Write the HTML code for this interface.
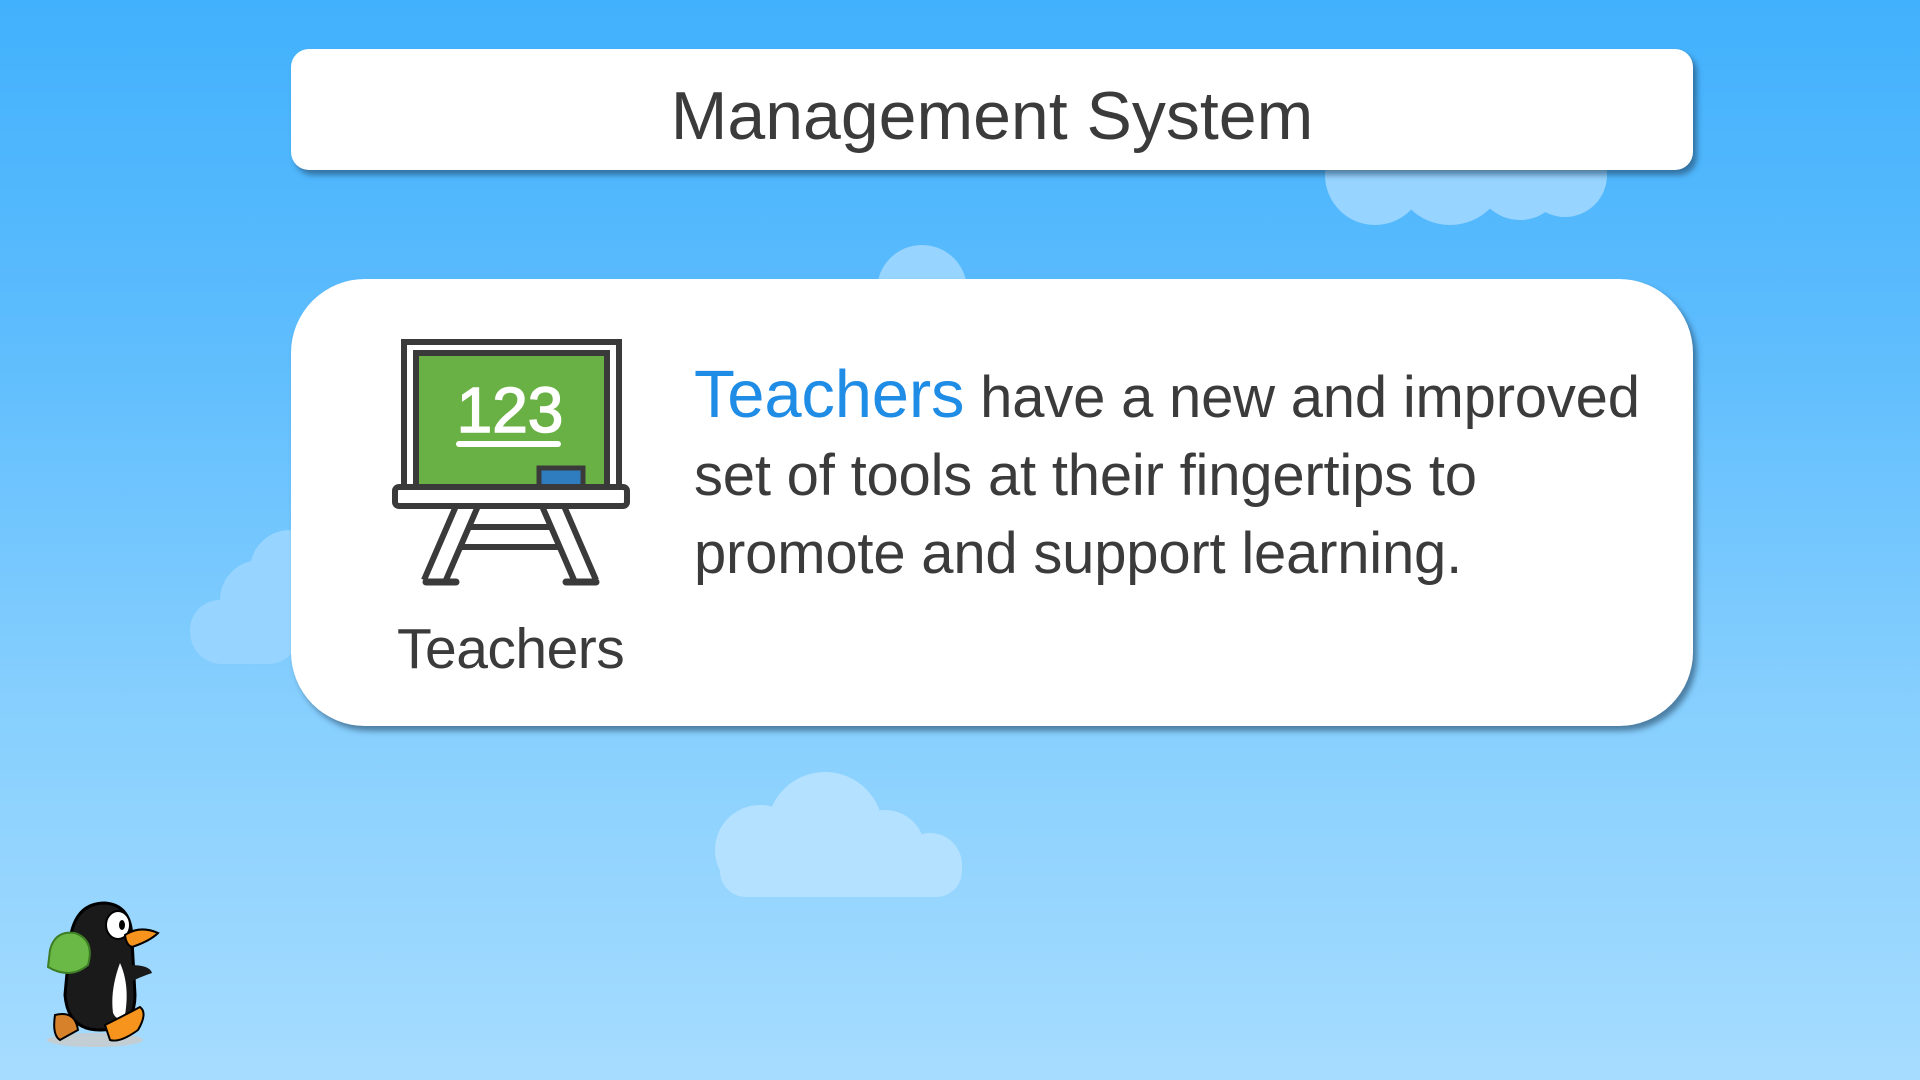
<!DOCTYPE html>
<html><head><meta charset="utf-8"><style>
html,body{margin:0;padding:0}
body{width:1920px;height:1080px;overflow:hidden;position:relative;background:linear-gradient(#42b1fd 0%,#5cbcfd 30%,#86cffe 65%,#a6dcff 100%);font-family:"Liberation Sans",sans-serif;}
.box{position:absolute;background:#fff;box-shadow:4px 5px 6px rgba(30,60,90,.55);}
#hdr{left:291px;top:49px;width:1402px;height:121px;border-radius:18px;}
#hdr div{position:absolute;left:0;right:0;top:27px;text-align:center;font-size:68px;color:#3b3b3b;line-height:80px;}
#card{left:291px;top:279px;width:1402px;height:447px;border-radius:74px;}
.t{position:absolute;color:#3b3b3b;white-space:nowrap}
</style></head><body>
<svg width="1920" height="1080" style="position:absolute;left:0;top:0">
<g fill="#97d4ff">
<circle cx="1375" cy="175" r="50"/><circle cx="1450" cy="168" r="57"/><circle cx="1520" cy="175" r="45"/><circle cx="1565" cy="175" r="42"/>
<circle cx="922" cy="290" r="45"/>
<circle cx="220" cy="630" r="30"/><circle cx="260" cy="600" r="40"/><circle cx="290" cy="570" r="40"/><rect x="190" y="600" width="110" height="64" rx="32"/>
</g>
<g fill="#b4e1ff">
<circle cx="760" cy="850" r="45"/><circle cx="825" cy="830" r="58"/><circle cx="885" cy="850" r="40"/><circle cx="930" cy="865" r="32"/><rect x="720" y="845" width="242" height="52" rx="26"/>
</g>
</svg>
<div class="box" id="hdr"><div>Management System</div></div>
<div class="box" id="card"></div>
<svg width="260" height="270" style="position:absolute;left:385px;top:330px" viewBox="385 330 260 270">
<rect x="404" y="342" width="215" height="150" fill="#fff" stroke="#3a3a3a" stroke-width="6"/>
<rect x="416" y="353" width="191" height="138" fill="#6ab145" stroke="#3a3a3a" stroke-width="6"/>
<text x="510" y="432" text-anchor="middle" font-family="Liberation Sans,sans-serif" font-size="64" fill="#fff" stroke="#fff" stroke-width="1.5">123</text>
<line x1="459" y1="444" x2="558" y2="444" stroke="#fff" stroke-width="6" stroke-linecap="round"/>
<rect x="539" y="468" width="44" height="22" fill="#2f7dbf" stroke="#3a3a3a" stroke-width="5"/>
<path d="M456 506 L424 580 M478 506 L446 580 M542 506 L574 580 M564 506 L596 580 M470 527 L550 527 M461 547 L559 547" stroke="#3a3a3a" stroke-width="6" fill="none"/>
<line x1="426" y1="582" x2="456" y2="582" stroke="#3a3a3a" stroke-width="7" stroke-linecap="round"/>
<line x1="566" y1="582" x2="596" y2="582" stroke="#3a3a3a" stroke-width="7" stroke-linecap="round"/>
<rect x="395" y="487" width="232" height="19" rx="4" fill="#fff" stroke="#3a3a3a" stroke-width="6"/>
</svg>
<div class="t" style="left:397px;top:614px;font-size:57px;line-height:70px;letter-spacing:-0.5px">Teachers</div>
<div class="t" style="left:694px;top:356px;font-size:58px;line-height:78px;letter-spacing:-0.2px">
<span style="color:#1f8ce6;font-size:67px">Teachers</span> have a new and improved<br>set of tools at their fingertips to<br>promote and support learning.</div>
<svg width="130" height="160" style="position:absolute;left:40px;top:895px" viewBox="0 0 130 160">
<ellipse cx="55" cy="145" rx="48" ry="7" fill="#c9c9c9" opacity=".8"/>
<path d="M30 45 Q35 8 65 8 Q92 10 92 45 L95 100 Q95 135 60 135 Q28 135 25 100 Z" fill="#1a1a1a" stroke="#000" stroke-width="3"/>
<path d="M80 68 Q90 90 85 120 Q78 128 73 118 Q70 95 80 68Z" fill="#fff"/>
<path d="M90 70 Q110 70 112 78 Q100 82 88 88Z" fill="#1a1a1a"/>
<ellipse cx="78" cy="30" rx="12" ry="14" fill="#fff" stroke="#000" stroke-width="2"/>
<ellipse cx="82" cy="30" rx="3" ry="5" fill="#000"/>
<path d="M85 40 Q100 30 118 38 Q110 46 92 52 Q86 50 85 40Z" fill="#f7941d" stroke="#000" stroke-width="2"/>
<path d="M10 55 Q15 35 35 38 Q55 45 48 70 Q30 85 8 72Z" fill="#6ab845" stroke="#3d7d25" stroke-width="2"/>
<path d="M15 120 Q35 115 38 135 L20 145 Q12 140 15 120Z" fill="#d7822a" stroke="#000" stroke-width="2"/>
<path d="M65 130 Q85 120 100 112 Q108 118 98 135 Q80 148 70 145Z" fill="#f7941d" stroke="#000" stroke-width="2"/>
</svg>
</body></html>
